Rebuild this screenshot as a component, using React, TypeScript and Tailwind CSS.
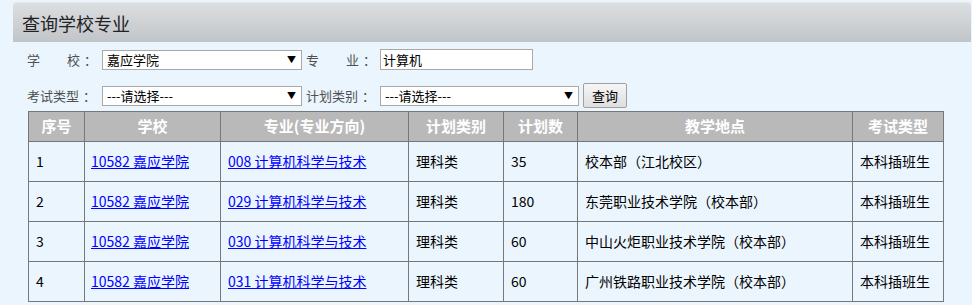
import React from "react";

const rows = [
  { no: "1", major: "008 计算机科学与技术", count: "35", place: "校本部（江北校区）" },
  { no: "2", major: "029 计算机科学与技术", count: "180", place: "东莞职业技术学院（校本部）" },
  { no: "3", major: "030 计算机科学与技术", count: "60", place: "中山火炬职业技术学院（校本部）" },
  { no: "4", major: "031 计算机科学与技术", count: "60", place: "广州铁路职业技术学院（校本部）" },
];

const font = { fontFamily: '"Noto Sans CJK SC", "Liberation Sans", sans-serif' };

const FakeSelect = ({ value, width }: { value: string; width: string }) => (
  <div
    className={`${width} h-[20px] bg-white border border-[#a9a9a9] flex items-center justify-between pl-[4px] pr-[5px] text-[13px] leading-none text-black`}
  >
    <span>{value}</span>
    <span className="text-[9px]">▼</span>
  </div>
);

const Colon = () => <span className="pl-[4px]">：</span>;

const App: React.FC = () => {
  return (
    <div className="min-h-screen bg-[#ebf5fd] pt-[2px]" style={font}>
      <div className="ml-[13px] mr-[1px] h-[40px] rounded-t-[4px] bg-gradient-to-b from-[#dcdfe2] to-[#c2c5c8] flex items-center pl-[9px] border-t border-[#e6e8ea]">
        <h1 className="text-[18px] text-[#222] leading-none">查询学校专业</h1>
      </div>

      <div className="pl-[27px] pt-[7px] flex flex-col gap-[13px]">
        <div className="flex items-center h-[21px]">
          <label className="w-[75px] text-[13px] text-[#505050] leading-none whitespace-nowrap">
            学<span className="inline-block w-[27px]" />校<Colon />
          </label>
          <FakeSelect value="嘉应学院" width="w-[200px]" />
          <label className="ml-[4px] w-[74px] text-[13px] text-[#505050] leading-none whitespace-nowrap">
            专<span className="inline-block w-[27px]" />业<Colon />
          </label>
          <div className="w-[153px] h-[21px] bg-white border border-[#a9a9a9] flex items-center pl-[2px] text-[13px] leading-none text-black">
            计算机
          </div>
        </div>
        <div className="flex items-center h-[25px]">
          <label className="w-[75px] text-[13px] text-[#505050] leading-none whitespace-nowrap">
            考试类型<Colon />
          </label>
          <FakeSelect value="---请选择---" width="w-[200px]" />
          <label className="ml-[4px] w-[74px] text-[13px] text-[#505050] leading-none whitespace-nowrap">
            计划类别<Colon />
          </label>
          <FakeSelect value="---请选择---" width="w-[199px]" />
          <button className="ml-[4px] w-[44px] h-[25px] bg-gradient-to-b from-[#f6f6f6] to-[#dedede] border border-[#a0a0a0] rounded-[2px] text-[13px] leading-none text-black">
            查询
          </button>
        </div>
      </div>

      <table className="ml-[28px] mt-[3px] border-collapse text-[14px] text-black">
        <thead>
          <tr className="h-[30px] bg-[#b9b9b9] text-white font-bold text-[15px]">
            <th className="w-[56px] border border-[#777]">序号</th>
            <th className="w-[136px] border border-[#777]">学校</th>
            <th className="w-[188px] border border-[#777]">专业(专业方向)</th>
            <th className="w-[95px] border border-[#777]">计划类别</th>
            <th className="w-[74px] border border-[#777]">计划数</th>
            <th className="w-[275px] border border-[#777]">教学地点</th>
            <th className="w-[91px] border border-[#777]">考试类型</th>
          </tr>
        </thead>
        <tbody>
          {rows.map((r) => (
            <tr key={r.no} className="h-[40px]">
              <td className="border border-[#777] pl-[7px]">{r.no}</td>
              <td className="border border-[#777] pl-[6px]">
                <a href="#" className="text-[#00f] underline">10582 嘉应学院</a>
              </td>
              <td className="border border-[#777] pl-[7px]">
                <a href="#" className="text-[#00f] underline">{r.major}</a>
              </td>
              <td className="border border-[#777] pl-[7px]">理科类</td>
              <td className="border border-[#777] pl-[7px]">{r.count}</td>
              <td className="border border-[#777] pl-[7px]">{r.place}</td>
              <td className="border border-[#777] pl-[7px]">本科插班生</td>
            </tr>
          ))}
        </tbody>
      </table>
    </div>
  );
};

export default App;
